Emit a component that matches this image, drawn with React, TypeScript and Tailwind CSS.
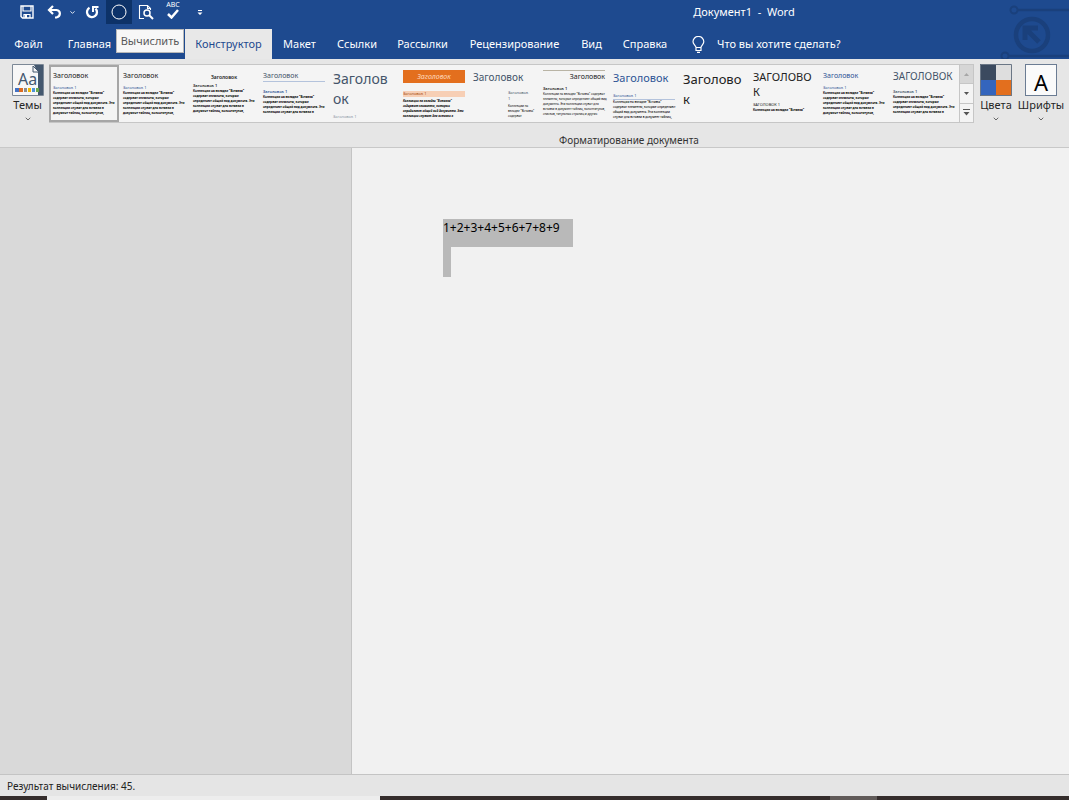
import React from "react";
import { ChevronDown } from "lucide-react";

const BODY_LINES = [
  "Коллекции на вкладке \"Вставка\"",
  "содержат элементы, которые",
  "определяют общий вид документа. Эти",
  "коллекции служат для вставки в",
  "документ таблиц, колонтитулов,",
];

const BODY_WIDE = [
  "Коллекции на вкладке \"Вставка\" содержат",
  "элементы, которые определяют общий вид",
  "документа. Эти коллекции служат для",
  "вставки в документ таблиц, колонтитулов,",
  "списков, титульных страниц и других",
];

const BODY_BLUE = [
  "Коллекции на вкладке \"Вставка\"",
  "содержат элементы, которые определяют",
  "общий вид документа. Эти коллекции",
  "служат для вставки в документ таблиц,",
];

type Preview = {
  id: string;
  title: string;
  titleClass: string;
  sub?: string;
  subClass?: string;
  lines?: string[];
  bodyClass?: string;
};

const previews: Preview[] = [
  { id: "current", title: "Заголовок", titleClass: "mt-[3px] text-[7px] leading-3", sub: "Заголовок 1", subClass: "mt-[3px] text-[#2f5496]", lines: BODY_LINES },
  { id: "office", title: "Заголовок", titleClass: "mt-1 text-[7px] leading-3", sub: "Заголовок 1", subClass: "mt-[3px] text-[#2f5496]", lines: BODY_LINES },
  { id: "centered", title: "Заголовок", titleClass: "mt-[5px] text-center text-[5px] leading-3 font-semibold", sub: "Заголовок 1", subClass: "font-semibold", lines: BODY_LINES },
  { id: "underline", title: "Заголовок", titleClass: "mt-1 h-3 border-b border-[#b4c3dc] text-[7px] leading-3 text-[#44546a]", sub: "Заголовок 1", subClass: "mt-[7px] text-[#2f5496] font-semibold", lines: BODY_LINES.slice(0, 4) },
  { id: "large", title: "Заголов\nок", titleClass: "mt-[3px] text-[14px] leading-5 text-[#44546a]", sub: "Заголовок 1", subClass: "mt-[5px] text-[#8a95a5]" },
  { id: "banner", title: "Заголовок", titleClass: "mt-1 bg-[#e36f1e] text-center text-[7px] leading-[13px] italic text-[#ffd9bd]", sub: "Заголовок 1", subClass: "mt-2 bg-[#f7cfb5] text-[#a34a12]", lines: BODY_LINES.slice(0, 4), bodyClass: "mt-[2px] font-bold italic" },
  { id: "caps", title: "Заголовок", titleClass: "mt-[5px] text-[10px] leading-3 text-[#44546a] [font-variant-caps:small-caps]", sub: "Заголовок\n1", subClass: "mt-[7px] ml-[35px] text-[#44546a] [font-variant-caps:small-caps]", lines: ["Коллекции на", "вкладке \"Вставка\"", "содержат"], bodyClass: "ml-[35px] mt-[2px] font-normal" },
  { id: "right", title: "Заголовок", titleClass: "mt-1 h-3 border-t border-[#b9b4a5] text-right text-[7px] leading-3 [font-variant-caps:small-caps]", sub: "Заголовок 1", subClass: "mt-1 font-semibold [font-variant-caps:small-caps]", lines: BODY_WIDE, bodyClass: "font-normal" },
  { id: "blue", title: "Заголовок", titleClass: "mt-1 text-[11px] leading-4 text-[#2f5496]", sub: "Заголовок 1", subClass: "mt-[7px] border-b border-[#b4c3dc] text-[#2f5496]", lines: BODY_BLUE, bodyClass: "font-medium" },
  { id: "black", title: "Заголово\nк", titleClass: "mt-[3px] text-[13px] leading-5" },
  { id: "upper", title: "ЗАГОЛОВО\nК", titleClass: "mt-[3px] text-[11px] leading-[15px]", sub: "ЗАГОЛОВОК 1", subClass: "mt-[3px]", lines: BODY_LINES.slice(0, 1) },
  { id: "word2010", title: "Заголовок", titleClass: "mt-1 text-[7px] leading-3 text-[#2f5496]", sub: "Заголовок 1", subClass: "mt-[3px] text-[#2f5496]", lines: BODY_LINES },
  { id: "word2013", title: "ЗАГОЛОВОК", titleClass: "mt-1 text-[10px] leading-3 text-[#44546a]", sub: "Заголовок 1", subClass: "mt-[7px] text-[#44546a] font-semibold", lines: BODY_LINES.slice(0, 4) },
];

const tabsLeft = [
  { label: "Файл", width: "w-[57px]" },
  { label: "Главная", width: "w-[59px] pl-[6px]" },
];

const tabsRight = [
  { label: "Макет", width: "w-[55px]" },
  { label: "Ссылки", width: "w-[60px]" },
  { label: "Рассылки", width: "w-[71px]" },
  { label: "Рецензирование", width: "w-[113px]" },
  { label: "Вид", width: "w-[41px]" },
  { label: "Справка", width: "w-[66px]" },
];

const SaveIcon = () => (
  <svg width="14" height="14" viewBox="0 0 14 14" fill="none" stroke="white">
    <path d="M1 1h12v12H2.500L1 11.500z" strokeWidth="1.400" />
    <path d="M3 1v5h8V1M4 13V9.500h6V13" strokeWidth="1.200" />
    <path d="M5 10h2v3H5z" fill="white" stroke="none" />
  </svg>
);

const UndoIcon = () => (
  <svg width="15" height="14" viewBox="0 0 15 14" fill="none" stroke="white" strokeWidth="2.200">
    <path d="M6 1 2 5l4 4M2 5h7.500c4.500.500 4.500 6.500 0 7.500H8" />
  </svg>
);

const RedoIcon = () => (
  <svg width="14" height="14" viewBox="0 0 14 14" fill="none" stroke="white" strokeWidth="2.300">
    <path d="M10.500 3.600A5 5 0 1 1 4.500 2.800" />
    <path d="M8 7V2h5.500" strokeWidth="2" />
  </svg>
);

const PreviewIcon = () => (
  <svg width="16" height="16" viewBox="0 0 16 16" fill="none" stroke="white">
    <path d="M6 14.500H1.500v-13h8l3 3V6M9.500 1.500v3h3" strokeWidth="1.100" />
    <circle cx="9" cy="9" r="3" strokeWidth="1.500" />
    <path d="m11 11 4 4" strokeWidth="2" />
  </svg>
);

const QuickButton = ({ label, className, children }: { label: string; className: string; children: React.ReactNode }) => (
  <button aria-label={label} className={`flex h-6 shrink-0 items-center justify-center ${className}`}>
    {children}
  </button>
);

const HeaderArt = () => (
  <svg className="absolute top-0 right-0" width="72" height="59" viewBox="0 0 72 59" fill="none" stroke="#1a407c">
    <circle cx="17" cy="10" r="3.500" strokeWidth="2" />
    <path d="M21 10h51" strokeWidth="2.500" />
    <circle cx="35" cy="35" r="16" strokeWidth="4.500" />
    <path d="M42 42 29 29M28 40V28h13" strokeWidth="5" />
    <circle cx="8" cy="56" r="3.500" strokeWidth="2" />
    <path d="M12 56h60" strokeWidth="2.500" />
  </svg>
);

const TitleBar = () => (
  <div className="flex h-6 items-center text-white">
    <div className="flex w-[419px] shrink-0 items-center pl-4">
      <QuickButton label="Сохранить" className="w-[22px]"><SaveIcon /></QuickButton>
      <QuickButton label="Отменить" className="ml-1 w-6"><UndoIcon /></QuickButton>
      <QuickButton label="Варианты отмены" className="w-3"><ChevronDown size={7} strokeWidth={3} /></QuickButton>
      <QuickButton label="Повторить" className="ml-[2px] w-6"><RedoIcon /></QuickButton>
      <QuickButton label="Вычислить" className="ml-[2px] w-[26px] bg-[#0d3268]">
        <svg width="16" height="16" viewBox="0 0 16 16" fill="none" stroke="white">
          <circle cx="8" cy="8" r="7" />
        </svg>
      </QuickButton>
      <QuickButton label="Предварительный просмотр" className="ml-[2px] w-6"><PreviewIcon /></QuickButton>
      <QuickButton label="Правописание" className="ml-[3px] w-6 flex-col gap-px pb-1">
        <span className="text-[7px] leading-[7px]">ABC</span>
        <svg width="12" height="10" viewBox="0 0 12 10" fill="none" stroke="white" strokeWidth="2.500">
          <path d="m1 5 3.500 3.500L11 1" />
        </svg>
      </QuickButton>
      <QuickButton label="Настройка панели" className="ml-[7px] w-4 pt-[2px]">
        <svg width="6" height="6" viewBox="0 0 6 6" fill="white">
          <path d="M1 0h4v1H1zM0.500 2.500h5L3 5z" />
        </svg>
      </QuickButton>
    </div>
    <h1 className="flex-1 text-center text-[11px] whitespace-pre">{"Документ1  -  Word"}</h1>
  </div>
);

const TabButton = ({ label, width }: { label: string; width: string }) => (
  <button className={`h-[30px] shrink-0 text-center whitespace-nowrap ${width}`}>{label}</button>
);

const TabBar = () => (
  <nav className="mt-[5px] flex h-[30px] items-start text-[11px] text-white">
    {tabsLeft.map((tab) => (
      <TabButton key={tab.label} {...tab} />
    ))}
    <div role="tooltip" className="h-6 w-[68px] shrink-0 border border-[#b8b8b8] bg-[#f7f7f7] text-center leading-[22px] text-[#595959]">
      Вычислить
    </div>
    <button className="ml-px h-[30px] w-[87px] shrink-0 bg-[#e8e8e8] text-[#1e4a8f]">Конструктор</button>
    {tabsRight.map((tab) => (
      <TabButton key={tab.label} {...tab} />
    ))}
    <button className="ml-[14px] flex h-[30px] items-center gap-3 whitespace-nowrap">
      <svg width="13" height="17" viewBox="0 0 13 17" fill="none" stroke="white" strokeWidth="1.200">
        <path d="M4 11.500C4 9.500 1 8.500 1 5.800a5.300 5.300 0 0 1 10.800 0C11.800 8.500 9 9.500 9 11.500zM4 11.500v3h5v-3M5 16.300h3" />
      </svg>
      Что вы хотите сделать?
    </button>
  </nav>
);

const StylePreview = ({ preview, selected }: { preview: Preview; selected: boolean }) => (
  <button
    className={`flex h-full w-[70px] shrink-0 flex-col items-stretch overflow-hidden text-left whitespace-pre text-[#222] ${
      selected ? "border-2 border-[#a6a6a6] px-[2px]" : "px-1 pt-px"
    }`}
  >
    <span className={`block shrink-0 ${preview.titleClass}`}>{preview.title}</span>
    {preview.sub && <span className={`block shrink-0 text-[4px] leading-[6px] ${preview.subClass}`}>{preview.sub}</span>}
    {preview.lines && (
      <span className={`block shrink-0 text-[3px] leading-[5px] text-black ${preview.bodyClass ?? "font-bold"}`}>
        {preview.lines.join("\n")}
      </span>
    )}
  </button>
);

const GalleryScroll = () => (
  <div className="flex w-[14px] shrink-0 flex-col border-l border-[#c6c6c6]">
    <button aria-label="Вверх" className="flex flex-1 items-center justify-center bg-[#d6d6d6]">
      <svg width="5" height="3" viewBox="0 0 5 3" fill="#a6a6a6"><path d="M0 3h5L2.500 0z" /></svg>
    </button>
    <button aria-label="Вниз" className="flex flex-1 items-center justify-center border-y border-[#c6c6c6]">
      <svg width="5" height="3" viewBox="0 0 5 3" fill="#555"><path d="M0 0h5L2.500 3z" /></svg>
    </button>
    <button aria-label="Дополнительно" className="flex flex-1 items-center justify-center">
      <svg width="7" height="7" viewBox="0 0 7 7" fill="#555"><path d="M0 0h7v1H0zM0.500 3h6L3.500 6.500z" /></svg>
    </button>
  </div>
);

const ToolButton = ({ label, className, children }: { label: string; className: string; children: React.ReactNode }) => (
  <button className={`flex shrink-0 flex-col items-center text-[11px] leading-4 text-[#262626] ${className}`}>
    {children}
    <span className="mt-px">{label}</span>
    <ChevronDown size={8} className="mt-[2px] shrink-0" />
  </button>
);

const Ribbon = () => (
  <section className="h-[89px] border-b border-[#c8c8c8] bg-[#e6e6e6] pt-[5px]">
    <div className="flex h-[59px]">
      <ToolButton label="Темы" className="ml-[6px] w-[43px]">
        <svg className="shrink-0" width="32" height="32" viewBox="0 0 32 32">
          <path d="M.5.500h31v31H.5z" fill="#f7f7f7" stroke="#7c8896" />
          <path d="M22 1h9v30h-5V9z" fill="#44586f" />
          <path d="M21 2v6h6z" fill="#f7f7f7" stroke="#44586f" />
          <text x="6" y="21" fontSize="16" fill="#44586f" fontFamily="Noto Sans, sans-serif">Aa</text>
          <path d="M3 24h4v4H3z" fill="#4472c4" />
          <path d="M7 24h4v4H7z" fill="#e06c1f" />
          <path d="M12 24h3v4h-3z" fill="#8c8c8c" />
          <path d="M16 24h3v4h-3z" fill="#f2b800" />
          <path d="M20 24h3v4h-3z" fill="#4d94d6" />
          <path d="M24 24h3v4h-3z" fill="#6aa84f" />
        </svg>
      </ToolButton>
      <div className="flex h-[59px] shrink-0 border border-l-0 border-[#c6c6c6] bg-[#f4f4f4]">
        {previews.map((preview, index) => (
          <StylePreview key={preview.id} preview={preview} selected={index === 0} />
        ))}
        <GalleryScroll />
      </div>
      <ToolButton label="Цвета" className="w-[44px]">
        <svg className="shrink-0" width="32" height="32" viewBox="0 0 32 32">
          <path d="M0 0h16v16H0z" fill="#3b4a5f" />
          <path d="M16 0h16v16H16z" fill="#dedede" />
          <path d="M0 16h16v16H0z" fill="#3465bd" />
          <path d="M16 16h16v16H16z" fill="#e36f1e" />
          <path d="M.5.500h31v31H.5z" fill="none" stroke="#6b7786" />
        </svg>
      </ToolButton>
      <ToolButton label="Шрифты" className="w-[46px]">
        <span className="flex h-8 w-8 shrink-0 items-center justify-center border border-[#6b7c93] bg-[#fafafa] pt-1 text-[22px] text-black">A</span>
      </ToolButton>
    </div>
    <p className="mt-[9px] pl-[189px] text-center text-[10px] leading-4 text-[#333]">Форматирование документа</p>
  </section>
);

const App = () => {
  return (
    <div className="flex h-screen flex-col overflow-hidden bg-[#f1f1f1] font-['Noto_Sans','Open_Sans',sans-serif]">
      <header className="relative h-[59px] shrink-0 bg-[#1e4a8f]">
        <HeaderArt />
        <TitleBar />
        <TabBar />
      </header>
      <Ribbon />
      <main className="flex min-h-0 flex-1">
        <aside className="w-[352px] shrink-0 border-r border-[#c4c4c4] bg-[#d9d9d9]" />
        <article className="flex-1 pt-[71px] pl-[91px] text-[12px] text-black">
          <p className="h-7 w-[130px] bg-[#b9b9b9] leading-[18px]">1+2+3+4+5+6+7+8+9</p>
          <div className="h-[30px] w-2 bg-[#b9b9b9]" />
        </article>
      </main>
      <footer className="h-[22px] shrink-0 border-t border-[#c4c4c4] bg-[#e5e5e5] px-[7px] text-[10px] leading-[22px] text-[#222]">
        Результат вычисления: 45.
      </footer>
      <div className="flex h-1 shrink-0 bg-[#352d2c]">
        <div className="ml-[47px] w-[333px] bg-[#ededed]" />
        <div className="ml-[450px] w-[47px] bg-[#615b59]" />
      </div>
    </div>
  );
};

export default App;
